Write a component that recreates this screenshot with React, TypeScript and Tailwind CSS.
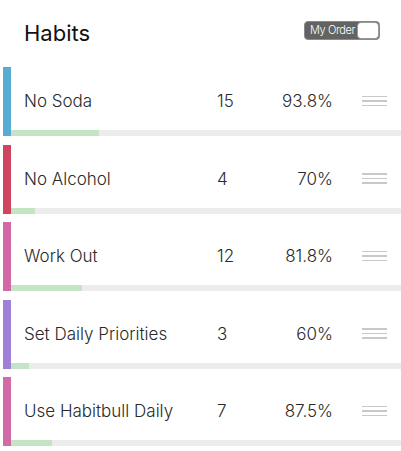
import React from "react";

const habits = [
  { name: "No Soda", count: "15", pct: "93.8%", color: "#58acd4", prog: 88 },
  { name: "No Alcohol", count: "4", pct: "70%", color: "#d1445f", prog: 24 },
  { name: "Work Out", count: "12", pct: "81.8%", color: "#d268a6", prog: 71 },
  { name: "Set Daily Priorities", count: "3", pct: "60%", color: "#9f80d8", prog: 18 },
  { name: "Use Habitbull Daily", count: "7", pct: "87.5%", color: "#d36aa8", prog: 41 },
];

export default function App() {
  return (
    <div className="w-[401px] h-[451px] bg-white overflow-hidden" style={{ fontFamily: "Inter, 'Noto Sans', sans-serif" }}>
      <div className="flex items-center h-[67px] pl-[24px] pr-[21px] pb-[6px]">
        <div className="flex-1 text-[22px] font-normal text-[#111] leading-none pt-[4px]">Habits</div>
        <div className="flex items-center h-[19px] w-[76px] rounded-[4px] bg-[#636363] border border-[#8a8a8a] overflow-hidden">
          <div className="flex-1 text-white text-[11px] font-light leading-none pl-[5px] tracking-[-0.4px] whitespace-nowrap">My Order</div>
          <div className="w-[22px] h-full bg-white rounded-[4px] border border-[#9a9a9a]" />
        </div>
      </div>
      <div className="flex flex-col gap-[8.5px]">
        {habits.map((h) => (
          <div key={h.name} className="flex h-[69px]">
            <div className="ml-[3px] w-[8px] h-full" style={{ backgroundColor: h.color }} />
            <div className="flex-1 flex flex-col">
              <div className="flex-1 flex items-center pl-[13px] pt-[7px] text-[17px] font-light text-[#2a2a2a]">
                <div className="w-[193px] whitespace-nowrap">{h.name}</div>
                <div className="w-[60px]">{h.count}</div>
                <div className="w-[56px] text-right">{h.pct}</div>
                <div className="ml-[29px] w-[25px] flex flex-col gap-[3px] -mt-[2px]">
                  <div className="h-[1.5px] bg-[#c8c8c8]" />
                  <div className="h-[1.5px] bg-[#c8c8c8]" />
                  <div className="h-[1.5px] bg-[#c8c8c8]" />
                </div>
              </div>
              <div className="h-[6px] bg-[#ececec]">
                <div className="h-full bg-[#c3e5c3]" style={{ width: h.prog }} />
              </div>
            </div>
          </div>
        ))}
      </div>
    </div>
  );
}
